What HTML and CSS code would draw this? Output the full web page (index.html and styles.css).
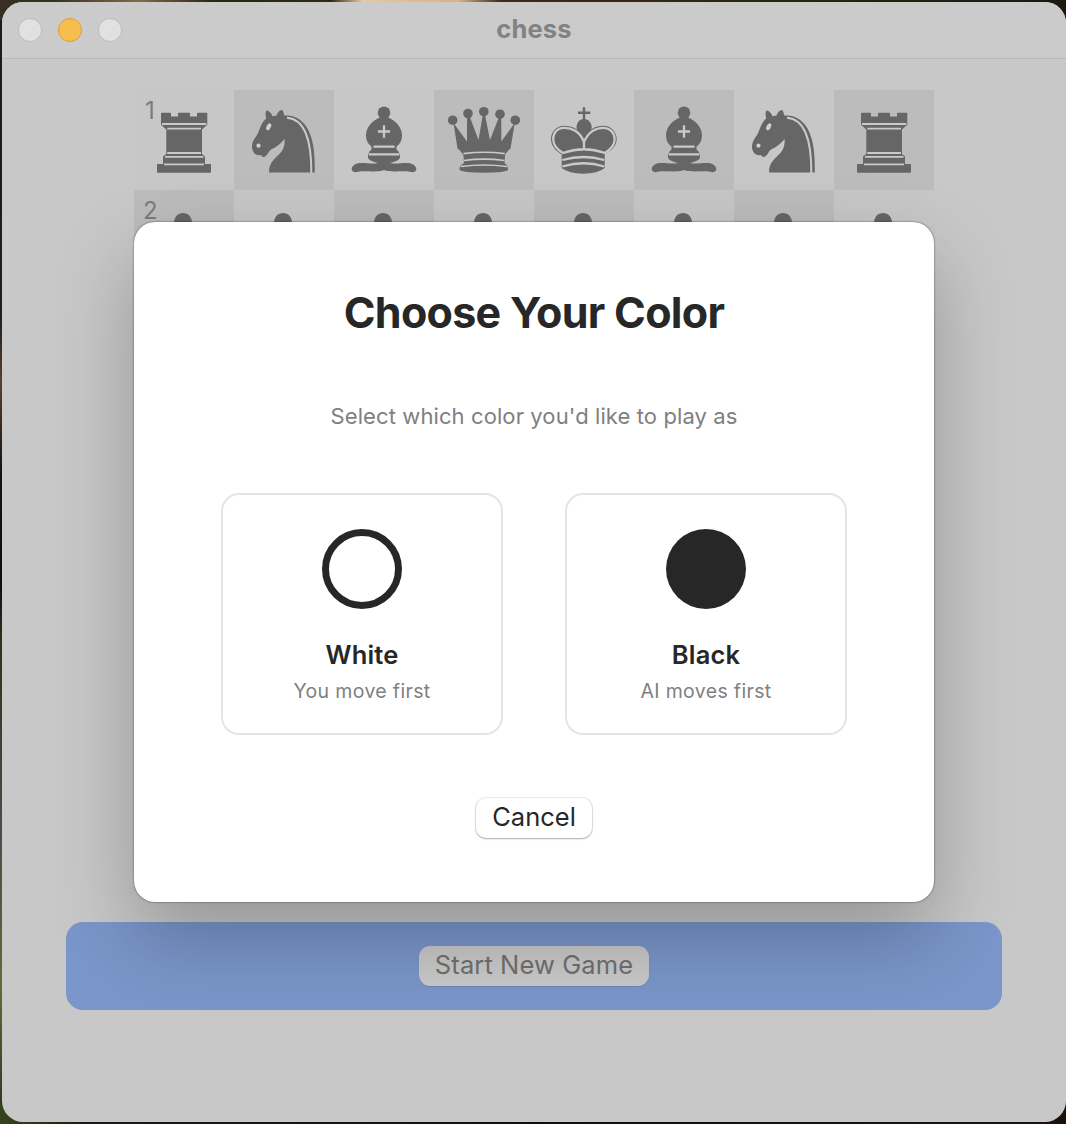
FILE: index.html
```html
<!DOCTYPE html>
<html lang="en">
<head>
<meta charset="utf-8">
<title>chess</title>
<link rel="stylesheet" href="styles.css">
</head>
<body>
<svg class="defs" aria-hidden="true">
  <symbol id="rook" viewBox="0 0 100 100">
    <path class="ink" d="M27 23.5q0-.8.8-.8H36.200q.8 0 .8.8V26.500h7V23.500q0-.8.8-.8H55.200q.8 0 .8.8V26.500h7V23.500q0-.8.8-.8H72.500q.8 0 .8.8V34.700L68 39.500V64l3 2.500V74h5q1 0 1 1v6.700q0 1-1 1H24q-1 0-1-1V75q0-1 1-1h5V66.500l3.300-2.500V39.500L27 34.700z"/>
    <path class="cut rook-cut" d="M28 34H72.300M33.300 38.700H67M33.300 63H67M31 66.800H69.500M30 74.300H70"/>
  </symbol>
  <symbol id="knight" viewBox="0 0 100 100">
    <path class="ink" d="M32.300 28.500C31 25 31.500 20.500 33 20.500C35.500 21 37.500 23.500 38.500 26.300L42.500 25.500C43.500 23 45.500 20 48 20C49.300 20.500 49.500 23.500 50.500 25.600C61 24.500 69 30.500 73.500 38.500C79.500 49 81 64 80.800 82.400H35C35 77 36.500 73 40 69.500C46 63 51 61 50.700 49C46 54 42.500 57 37.500 59.300C34.500 61 34.500 64 31.500 66.300C29.500 67.500 28 67 27.300 64.900C24.500 65.500 22 65 20.300 63.200C18 60.500 17.500 57 18.500 53C20 48.500 22.500 46.500 24.300 42.500C26 38 28.500 31 32.300 28.500z"/>
    <path class="cut mane" d="M53 27.800C71 29 77.500 50 77.300 83"/>
    <ellipse class="cut-fill" cx="34.700" cy="36.700" rx="2.100" ry="3.700" transform="rotate(27 34.700 36.700)"/>
    <circle class="cut-fill" cx="24.500" cy="55.700" r="2.100"/>
  </symbol>
  <symbol id="bishop" viewBox="0 0 100 100">
    <circle class="ink" cx="50" cy="22.700" r="6.300"/>
    <path class="ink" d="M47 27H53C62 30.500 68 37.500 68 45.500C68 50.500 66 54 62.500 56.500V59.500C65 61.500 66 64 66 67C66 70 62 71.500 56 73C62 74.500 68 72.500 75 73C80 74 82.500 77 82.300 79.500C81.500 82.500 78.500 82.500 76 81.700C67 80.500 57 82.700 50 80C43 82.700 33 80.500 24 81.700C21.500 82.500 18.500 82.500 17.700 79.500C17.500 77 20 74 25 73C32 72.500 38 74.500 44 73C38 71.500 34 70 34 67C34 64 35 61.500 37.500 59.500V56.500C34 54 32 50.500 32 45.500C32 37.500 38 30.500 47 27z"/>
    <path class="cut wide" d="M50 35.300V47.700M43.900 41.500H56.100M39.500 56.700H60.600M35 64.300H65.200"/>
  </symbol>
  <symbol id="queen" viewBox="0 0 100 100">
    <g class="ink"><circle cx="18.700" cy="30.200" r="4.800"/><circle cx="34" cy="23.500" r="4.800"/><circle cx="49.800" cy="21.700" r="4.800"/><circle cx="66" cy="24.200" r="4.800"/><circle cx="81.300" cy="30.200" r="4.800"/>
    <path d="M19.500 33L33 51.500L33 26H35.500L44.500 50L48.800 25H51L56 50L65 27H67.300V51.500L80.800 33L76.500 58.500Q71 63 71 66L70.500 73Q74 75 74 80Q72 82.500 50 82.700Q28 82.500 25.500 80Q25.500 75 30 73L29.500 66Q28.500 62 23.500 58.500z"/></g>
    <path class="cut" d="M29.500 63.600Q50 61 70.800 63.600M30 70.500Q50 67.800 70.500 70.500M27 76.500Q50 73.500 73 76.500"/>
  </symbol>
  <symbol id="king" viewBox="0 0 100 100">
    <path class="line" d="M50 17.300V31M44 22.700H56.300"/>
    <path class="ink" d="M50 29C55 29 57.700 33 57.700 38L56 43L50 51L44 43L42.500 38C42.500 33 45 29 50 29z"/>
    <path class="ink" d="M50 49C46 39 38 35.700 30 35.700C22 36 17 42 17 49C17 56 22 61 27.700 64.500V78Q35 83.700 49 83.700Q64 83.700 70.700 78V64.500C77 61 82.700 56 82.700 49C82.700 42 77 35.700 69 35.700C61 35.700 54 40 50 49z"/>
    <path class="cut wide" d="M50 59V52C46 41 37 37.500 30 37.800C23 38 19.200 43 19.200 49C19.200 55 23 59.500 29 63Q50 55.500 71 63C76.500 59.500 80.700 55 80.700 49C80.700 43 76 37.800 69 37.800C62 37.800 54 42 50 52"/>
    <path class="cut wide" d="M28.300 70Q50 64 70.200 70M28.300 76.500Q50 70 70.200 76.500"/>
  </symbol>
  <symbol id="pawn" viewBox="0 0 100 100">
    <path class="ink" d="M49 23a9 9 0 0 1 5.500 16c6 3 9 12 2 18c10 4 14 14 14 26H27.500c0-12 4-22 14-26c-7-6-4-15 2-18A9 9 0 0 1 49 23z"/>
  </symbol>
</svg>

<div class="window">
  <header class="titlebar">
    <div class="lights"><i></i><i class="minimize"></i><i></i></div>
    <h1>chess</h1>
  </header>
  <main>
    <div class="board">
      <div class="square"><span class="rank one">1</span><svg><use href="#rook"/></svg></div>
      <div class="square"><svg><use href="#knight"/></svg></div>
      <div class="square"><svg><use href="#bishop"/></svg></div>
      <div class="square"><svg><use href="#queen"/></svg></div>
      <div class="square"><svg><use href="#king"/></svg></div>
      <div class="square"><svg><use href="#bishop"/></svg></div>
      <div class="square"><svg><use href="#knight"/></svg></div>
      <div class="square"><svg><use href="#rook"/></svg></div>
      <div class="square"><span class="rank">2</span><svg><use href="#pawn"/></svg></div>
      <div class="square"><svg><use href="#pawn"/></svg></div>
      <div class="square"><svg><use href="#pawn"/></svg></div>
      <div class="square"><svg><use href="#pawn"/></svg></div>
      <div class="square"><svg><use href="#pawn"/></svg></div>
      <div class="square"><svg><use href="#pawn"/></svg></div>
      <div class="square"><svg><use href="#pawn"/></svg></div>
      <div class="square"><svg><use href="#pawn"/></svg></div>
    </div>
    <div class="toolbar"><button class="start">Start New Game</button></div>
  </main>

  <section class="dialog">
    <h2>Choose Your Color</h2>
    <p class="prompt">Select which color you'd like to play as</p>
    <div class="choices">
      <div class="choice"><div class="disc hollow"></div><h3>White</h3><p>You move first</p></div>
      <div class="choice"><div class="disc"></div><h3>Black</h3><p>AI moves first</p></div>
    </div>
    <button class="cancel">Cancel</button>
  </section>
</div>
</body>
</html>
```
FILE: styles.css
```css
* { box-sizing: border-box; margin: 0; padding: 0; }
body {
  width: 1066px; height: 1124px; overflow: hidden; padding: 2px 0 2px 2px;
  font-family: Inter, "Liberation Sans", sans-serif;
  background:
    linear-gradient(90deg, #35301f 0 5%, #7d6c48 13%, #2b2417 20%, #302719 31%, #e8c8a0 34%, #d8b08a 43%, #3a2b1c 47%, #2c2416 70%, #1d1810) top / 100% 20px no-repeat,
    linear-gradient(90deg, #37431f, #1b1b12 8%, #150d0d 50%, #1c120c) bottom / 100% 20px no-repeat,
    linear-gradient(#151d20, #1c201c 28%, #5a4030 34%, #15130f 42%, #0c100c 52%, #2c3320 57%, #4c4f46 75%, #66683a 88%, #2b3020);
}
.defs { position: absolute; width: 0; height: 0; }
.ink { fill: #666; }
.line { fill: none; stroke: #666; stroke-width: 2.4; }
.cut { fill: none; stroke: #cacaca; stroke-width: 1.6; }
.cut.rook-cut { stroke-width: 1.8; }
.cut.mane { stroke-width: 2; }
.cut.wide { stroke-width: 2.3; }
.cut-fill { fill: #d0d0d0; }

.window {
  position: relative; height: 1120px; border-radius: 21px; overflow: hidden;
  background: #c8c8c8;
}
.titlebar {
  position: relative; height: 57px; display: flex; align-items: center; justify-content: center;
  background: #cbcbcb; border-bottom: 1px solid #b7b7b7;
}
.titlebar h1 { font-size: 25.500px; font-weight: 700; line-height: 32px; letter-spacing: .2px; color: #828282; padding-bottom: 2px; }
.lights { position: absolute; left: 16px; top: 16px; display: flex; gap: 16px; }
.lights i { width: 24px; height: 24px; border-radius: 50%; background: #e1e1e1; border: 1px solid #bcbcbc; }
.lights .minimize { background: #f5be4e; border-color: #dd9f35; }

main { padding: 31px 64px 0; display: flex; flex-direction: column; align-items: center; }
.board {
  width: 800px; height: 800px; display: grid;
  grid-template-columns: repeat(8, 100px); grid-auto-rows: 100px;
  background: conic-gradient(#bcbcbc 25%, #c7c7c7 0 50%, #bcbcbc 0 75%, #c7c7c7 0) 0 0 / 200px 200px;
}
.square { position: relative; }
.square svg { display: block; width: 100px; height: 100px; }
.rank { position: absolute; left: 9px; top: 6px; font-size: 24px; line-height: 30px; color: #7c7c7c; }
.rank.one { left: 11px; }

.toolbar {
  width: 936px; height: 88px; margin-top: 32px; border-radius: 17px; background: #7a96ca;
  display: flex; align-items: center; justify-content: center;
}
button { border: 0; font-family: inherit; font-size: 25.500px; line-height: 30px; text-align: center; white-space: nowrap; }
.start { width: 230px; height: 40px; border-radius: 11px; background: #c9c9c9; color: #707070; padding-bottom: 2px; letter-spacing: .1px; box-shadow: 0 1px 1px rgba(0,0,0,.12); }

.dialog {
  position: absolute; left: 132px; top: 220px; width: 800px; height: 680px;
  border-radius: 21px; background: #fff; color: #272727; text-align: center;
  display: flex; flex-direction: column; align-items: center;
  box-shadow: 0 0 2px rgba(0,0,0,.65), 0 36px 80px rgba(0,0,0,.25);
}
.dialog h2 { margin-top: 64px; font-size: 43px; line-height: 52px; font-weight: 700; letter-spacing: -.7px; }
.prompt { margin-top: 64px; font-size: 22px; line-height: 28px; letter-spacing: .1px; color: #808080; }
.choices { display: flex; gap: 62px; margin-top: 63px; }
.choice {
  width: 282px; height: 242px; border: 2px solid #e5e5e5; border-radius: 18px; padding-top: 34px;
  display: flex; flex-direction: column; align-items: center;
}
.disc { width: 80px; height: 80px; border-radius: 50%; background: #272727; }
.disc.hollow { background: #fff; border: 7px solid #272727; }
.choice h3 { margin-top: 30px; font-size: 25.500px; line-height: 32px; font-weight: 600; letter-spacing: .2px; }
.choice p { margin-top: 8px; font-size: 19.500px; line-height: 24px; letter-spacing: .35px; color: #808080; }
.cancel {
  margin-top: 63px; width: 116px; height: 40px; border-radius: 10px; background: #fff; color: #272727; padding-bottom: 2px;
  box-shadow: 0 0 0 1px rgba(0,0,0,.07), 0 1px 2px rgba(0,0,0,.28);
}
```
